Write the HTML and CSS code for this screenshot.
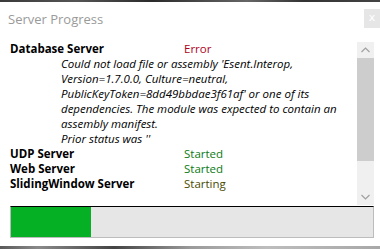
FILE: index.html
```html
<!DOCTYPE html>
<html>
<head>
<meta charset="utf-8">
<link rel="stylesheet" href="styles.css">
</head>
<body>
<div class="window">
  <div class="topstrip"></div>
  <div class="titlebar">
    <span class="title">Server Progress</span>
    <span class="close">x</span>
  </div>
  <div class="panel">
    <div class="list">
      <div class="row">
        <span class="name">Database Server</span>
        <span class="status error">Error</span>
      </div>
      <div class="message">Could not load file or assembly 'Esent.Interop, Version=1.7.0.0, Culture=neutral, PublicKeyToken=8dd49bbdae3f61af' or one of its dependencies. The module was expected to contain an assembly manifest.<br>Prior status was ''</div>
      <div class="row">
        <span class="name">UDP Server</span>
        <span class="status started">Started</span>
      </div>
      <div class="row">
        <span class="name">Web Server</span>
        <span class="status started">Started</span>
      </div>
      <div class="row">
        <span class="name">SlidingWindow Server</span>
        <span class="status starting">Starting</span>
      </div>
    </div>
    <div class="scrollbar">
      <div class="sb-btn">
        <svg width="9" height="6" viewBox="0 0 9 6"><path d="M0.5 5 L4.5 1 L8.5 5" fill="none" stroke="#a0a0a0" stroke-width="1.2"/></svg>
      </div>
      <div class="sb-thumb"></div>
      <div class="sb-track"></div>
      <div class="sb-btn">
        <svg width="9" height="6" viewBox="0 0 9 6"><path d="M0.5 1 L4.5 5 L8.5 1" fill="none" stroke="#a0a0a0" stroke-width="1.2"/></svg>
      </div>
    </div>
  </div>
  <div class="progress">
    <div class="fill" style="width:22%"></div>
  </div>
  <div class="bottomstrip"></div>
</div>
</body>
</html>
```
FILE: styles.css
```css
html, body {
  margin: 0;
  padding: 0;
  background: #ffffff;
}
.window {
  width: 380px;
  height: 249px;
  display: flex;
  flex-direction: column;
  overflow: hidden;
  font-family: "Open Sans", "DejaVu Sans", sans-serif;
}
.topstrip {
  height: 2px;
  background: linear-gradient(90deg, #3a3a3a, #555 20%, #2b2b2b 40%, #666 65%, #333 80%, #444);
  flex: none;
}
.titlebar {
  height: 38px;
  flex: none;
  display: flex;
  justify-content: space-between;
  align-items: flex-start;
}
.title {
  margin: 8px 0 0 8px;
  font-size: 13px;
  color: #9a9a9a;
  font-family: "Open Sans", sans-serif;
}
.close {
  margin-top: 7px;
  width: 16px;
  height: 19px;
  background: #e6e6e6;
  color: #ffffff;
  font-size: 11px;
  line-height: 18px;
  text-align: center;
  font-family: "DejaVu Sans", sans-serif;
}
.panel {
  height: 165px;
  flex: none;
  display: flex;
  margin-right: 6px;
}
.list {
  flex: 1;
  padding: 1px 0 0 10px;
  font-size: 11.5px;
  line-height: 15px;
  color: #000;
}
.row {
  display: flex;
}
.name {
  width: 174px;
  font-weight: bold;
}
.status {
  font-weight: normal;
}
.error { color: #b0001a; }
.started { color: #0a7a14; }
.starting { color: #4a4a00; }
.message {
  padding-left: 51px;
  font-style: italic;
  font-size: 11.5px;
  line-height: 15px;
  width: 290px;
}
.scrollbar {
  width: 17px;
  margin-top: 2px;
  display: flex;
  flex-direction: column;
  background: #f0f0f0;
}
.sb-btn {
  height: 16px;
  display: flex;
  align-items: center;
  justify-content: center;
  flex: none;
}
.sb-thumb {
  height: 103px;
  background: #cdcdcd;
  flex: none;
}
.sb-track {
  flex: 1;
}
.progress {
  height: 30px;
  flex: none;
  margin: 1px 6px 0 10px;
  border-top: 1px solid #000;
  border-left: 1px solid #bcbcbc;
  border-right: 1px solid #bcbcbc;
  border-bottom: 1px solid #bcbcbc;
  background: #e6e6e6;
  display: flex;
}
.fill {
  background: #06b025;
}
.bottomstrip {
  margin-top: 8px;
  height: 4px;
  background: linear-gradient(90deg, #5a5a5a, #8a8a8a 10%, #444 30%, #9a9a9a 50%, #bdbdbd 70%, #a8a8a8);
  flex: none;
}
```
